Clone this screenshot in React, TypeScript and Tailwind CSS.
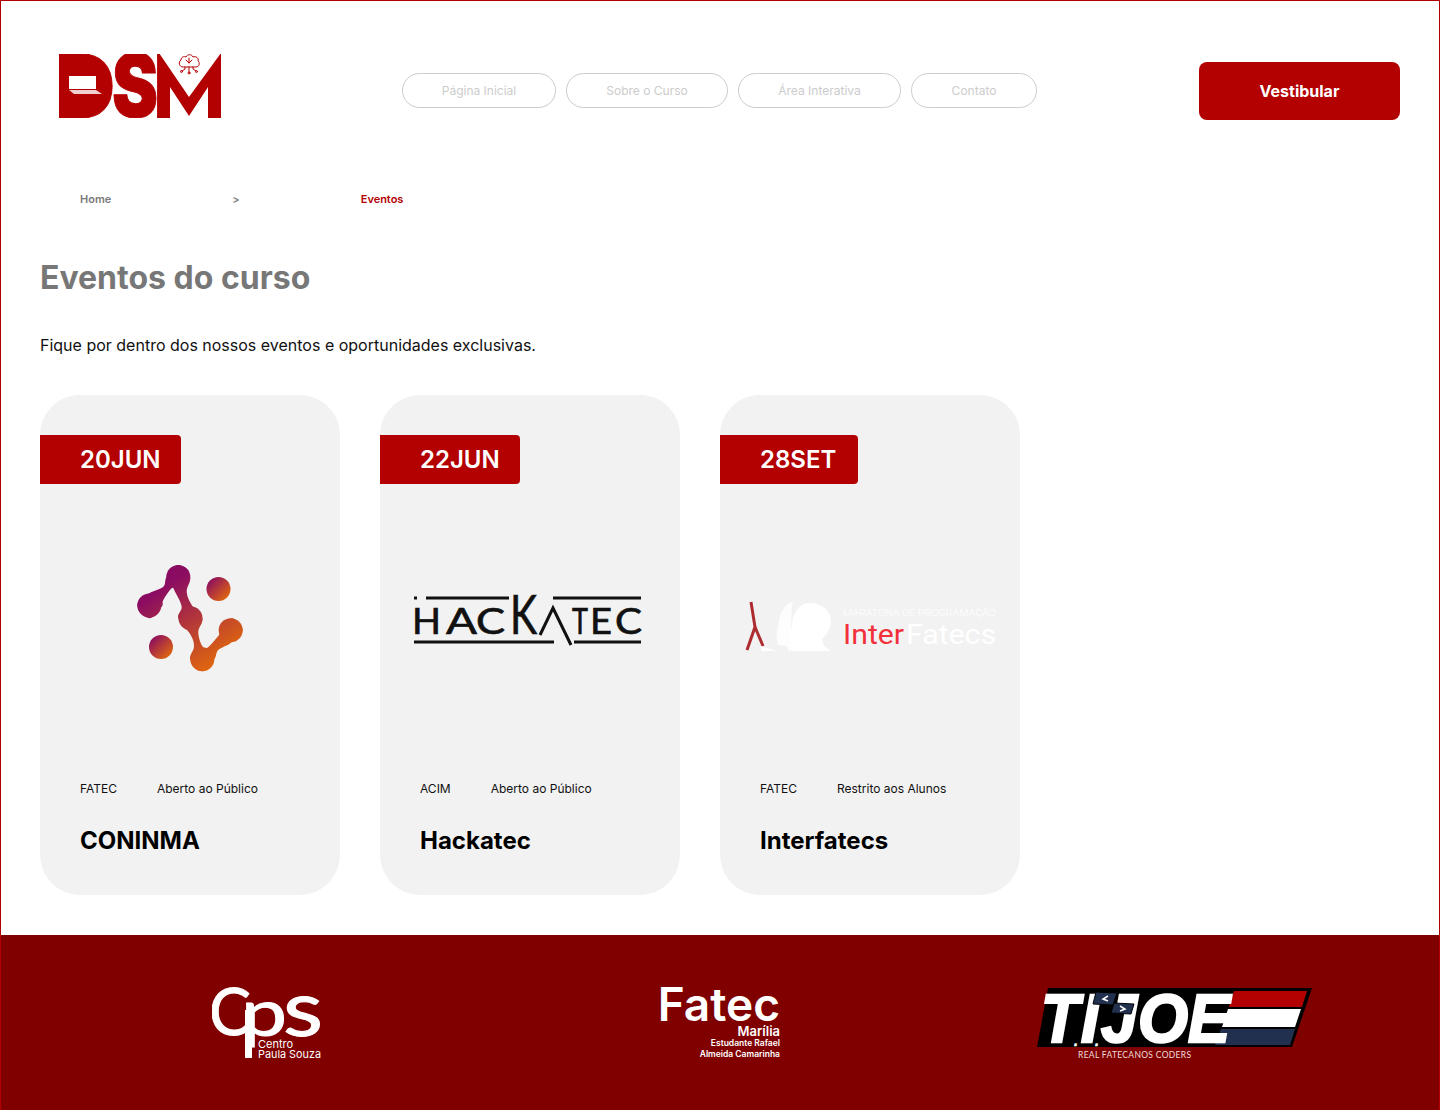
const navItems = [
  { label: 'Página Inicial', width: 'w-[154px]' },
  { label: 'Sobre o Curso', width: 'w-[162px]' },
  { label: 'Área Interativa', width: 'w-[163px]' },
  { label: 'Contato', width: 'w-[126px]' },
]

const FONT = 'Inter, sans-serif'

// closed catmull-rom spline through the traced outline points
function smoothPath(pts: number[][]) {
  const n = pts.length
  let d = `M${pts[0][0]} ${pts[0][1]}`
  for (let i = 0; i < n; i++) {
    const [p0, p1, p2, p3] = [pts[(i - 1 + n) % n], pts[i], pts[(i + 1) % n], pts[(i + 2) % n]]
    const c1 = [p1[0] + (p2[0] - p0[0]) / 6, p1[1] + (p2[1] - p0[1]) / 6]
    const c2 = [p2[0] - (p3[0] - p1[0]) / 6, p2[1] - (p3[1] - p1[1]) / 6]
    d += `C${c1[0]} ${c1[1]} ${c2[0]} ${c2[1]} ${p2[0]} ${p2[1]}`
  }
  return d + 'Z'
}

const moleculeOutline = [
  [178.3, 565], [190, 576.7], [186.7, 591.7], [191.7, 605], [202.3, 618.3], [198.3, 631.7], [201.7, 645],
  [207.3, 647.7], [219, 635], [231, 618.3], [242.7, 630], [231, 642.7], [218.3, 650], [214.3, 659.3],
  [202.3, 671.3], [190.3, 659.3], [194, 646.7], [190.7, 635], [178.3, 618.3], [181.7, 606.7], [175, 591.7],
  [171.7, 588.3], [163.3, 600], [161.7, 606.7], [149.3, 618.3], [137.3, 605], [149.3, 593.3], [163.3, 586.7],
  [166.7, 576.7],
]

function DsmLogo() {
  return (
    <svg width="162" height="64" viewBox="59 54 162 64" className="block">
      <rect x="70" y="62" width="26" height="48" fill="#b30000" />
      <rect x="166" y="56" width="44" height="62" fill="#b30000" />
      <g fontFamily={FONT} fontWeight="900" fontSize="88" fill="#b30000" stroke="#b30000" strokeWidth="1">
        <text x="55" y="118" textLength="60" lengthAdjust="spacingAndGlyphs">D</text>
        <text x="112" y="117" textLength="46" lengthAdjust="spacingAndGlyphs">S</text>
        <text x="154" y="118" textLength="71" lengthAdjust="spacingAndGlyphs">M</text>
      </g>
      <polygon points="159,53 189,97 221,53" fill="#fff" />
      <polygon points="170,87 189,116 208,87 208,120 170,120" fill="#fff" />
      <rect x="69" y="76" width="27" height="13" fill="#fff" />
      <polygon points="69,90 96,90 102,94 74,94" fill="#f0d0d0" />
      {/* cloud with circuit lines */}
      <g fill="none" stroke="#b30000" strokeWidth="1" strokeLinecap="round">
        <path d="M183 67c-4 0-5-5-2-7 0-3 3-4 5-3 1-3 6-3 7 0 3-1 6 1 5 4 2 1 2 6-2 6z" />
        <path d="M189 58v5M186 60l3 3 3-3M189 67v5M185 67v2l-3 2M193 67v2l3 2" />
        <circle cx="189" cy="73" r="1" />
        <circle cx="181.500" cy="71.500" r="1" />
        <circle cx="196.500" cy="71.500" r="1" />
      </g>
    </svg>
  )
}

function MoleculeLogo() {
  return (
    <svg width="300" height="268" viewBox="40 484 300 268" className="block">
      <defs>
        <linearGradient id="mol" gradientUnits="userSpaceOnUse" x1="165" y1="585" x2="220" y2="665">
          <stop offset="0" stopColor="#8a0b62" />
          <stop offset="1" stopColor="#e2690c" />
        </linearGradient>
        <linearGradient id="dotA" x1="0" y1="0" x2="1" y2="1">
          <stop offset="0.1" stopColor="#8a0b62" />
          <stop offset="0.9" stopColor="#e2690c" />
        </linearGradient>
      </defs>
      <g fill="url(#mol)">
        <path d={smoothPath(moleculeOutline)} />
        <circle cx="149.300" cy="605.500" r="12" />
        <circle cx="178.300" cy="577" r="12" />
        <circle cx="190.500" cy="618.300" r="12" />
        <circle cx="202.300" cy="659.300" r="12" />
        <circle cx="230.700" cy="630.300" r="12" />
      </g>
      <circle cx="218.500" cy="589" r="12" fill="url(#dotA)" />
      <circle cx="161" cy="647" r="12" fill="url(#dotA)" />
    </svg>
  )
}

function HackatecLogo() {
  const letters: [string, number, number][] = [
    ['H', 412, 29],
    ['A', 446, 31],
    ['C', 476, 29],
    ['T', 572, 16],
    ['E', 590, 22],
    ['C', 615, 27],
  ]
  return (
    <svg width="300" height="268" viewBox="380 484 300 268" className="block">
      <g fontFamily="Lato, sans-serif" fontWeight="400" fill="#111" stroke="#111" strokeWidth="0.7">
        {letters.map(([ch, x, w]) => (
          <text key={x} x={x} y="634" fontSize="37.500" textLength={w} lengthAdjust="spacingAndGlyphs">{ch}</text>
        ))}
        <text x="510" y="634" fontSize="54" textLength="27" lengthAdjust="spacingAndGlyphs">K</text>
      </g>
      <g stroke="#111" strokeWidth="3" fill="none">
        <path d="M414 598h3M426 598h83M553 598h88M414 642h140M574 642h67" />
        <path d="M540 635L553 608L571 645" />
      </g>
    </svg>
  )
}

function InterfatecsLogo() {
  return (
    <svg width="300" height="268" viewBox="720 484 300 268" className="block">
      <g fill="none" stroke="#ad2c30" strokeWidth="3">
        <path d="M751 602L755 627L747 650" />
        <path d="M755 627L763 646" />
      </g>
      <path d="M760 646L777 651L762 651z" fill="#fff" />
      <path d="M778 645c-2-8-2-11 0-13-1-2-2-3 0-5 1-14 7-24 15-25-3 12-2 36 2 48l-6 1-2-5z" fill="#fff" opacity="0.8" />
      <path d="M792 651l-1-8c-2-1-1-3 0-4-1-1-2-2-1-3l-1-3 3-5c0-14 6-25 18-25 12 0 21 8 21 18 0 8-5 14-9 18l2 7 7 5z" fill="#fff" />
      <text x="843" y="616" fontFamily="Roboto, sans-serif" fontWeight="300" fontSize="9" fill="#fff" textLength="153" lengthAdjust="spacingAndGlyphs">MARATONA DE PROGRAMAÇÃO</text>
      <text x="843" y="644" fontFamily="Roboto, sans-serif" fontWeight="400" fontSize="28" fill="#f2303a" textLength="61" lengthAdjust="spacingAndGlyphs">Inter</text>
      <text x="906" y="644" fontFamily="Roboto, sans-serif" fontWeight="400" fontSize="28" fill="#fff" textLength="90" lengthAdjust="spacingAndGlyphs">Fatecs</text>
    </svg>
  )
}

function CpsLogo() {
  return (
    <svg width="110" height="72" viewBox="212 987 110 72" className="block">
      <rect x="245" y="1010" width="7" height="48" fill="#fff" />
      <g fontFamily="Lato, sans-serif" fontWeight="400" fill="#fff" stroke="#fff" strokeWidth="1">
        <text x="209" y="1035" fontSize="65" textLength="42" lengthAdjust="spacingAndGlyphs">C</text>
        <text x="241" y="1036" fontSize="66" textLength="46" lengthAdjust="spacingAndGlyphs">p</text>
        <text x="283" y="1036" fontSize="78" textLength="40" lengthAdjust="spacingAndGlyphs">s</text>
      </g>
      <g fontFamily={FONT} fontSize="11" fill="#fff">
        <text x="258" y="1048">Centro</text>
        <text x="258" y="1058" textLength="63" lengthAdjust="spacingAndGlyphs">Paula Souza</text>
      </g>
    </svg>
  )
}

function FatecLogo() {
  return (
    <div className="mb-1 flex w-[119px] flex-col items-end text-white">
      <span className="text-[46px] font-semibold leading-[44px]">Fatec</span>
      <span className="mt-[-2px] text-[13px] font-semibold leading-[14px]">Marília</span>
      <span className="text-[8.500px] font-semibold leading-[11px]">Estudante Rafael</span>
      <span className="text-[8.500px] font-semibold leading-[11px]">Almeida Camarinha</span>
    </div>
  )
}

function TiJoeLogo() {
  const letters: [string, number, number][] = [
    ['T', 1040, 38],
    ['I', 1080, 18],
    ['J', 1100, 36],
    ['O', 1137, 50],
    ['E', 1187, 42],
  ]
  return (
    <svg width="276" height="72" viewBox="1036 987 276 72" className="block">
      <polygon points="1047,988 1311,988 1291,1047 1036,1047" fill="#000" />
      <polygon points="1233,991 1306,991 1301,1007 1228,1007" fill="#b30000" />
      <polygon points="1227,1009 1300,1009 1294,1027 1221,1027" fill="#fff" />
      <polygon points="1220,1029 1294,1029 1289,1045 1214,1045" fill="#22304f" />
      <g fontFamily="'Liberation Sans', sans-serif" fontWeight="700" fontStyle="italic" fill="#fff" stroke="#fff" strokeWidth="2.500">
        {letters.map(([ch, x, w]) => (
          <text key={ch} x={x} y="1042" fontSize="68" textLength={w} lengthAdjust="spacingAndGlyphs">{ch}</text>
        ))}
        <text x="1073" y="1046" fontSize="14" strokeWidth="0.5">.</text>
        <text x="1094" y="1046" fontSize="14" strokeWidth="0.5">.</text>
      </g>
      <g stroke="#000" strokeWidth="1" fill="#22304f">
        <polygon points="1095,992 1116,993 1112,1005 1092,1004" />
        <polygon points="1113,1003 1133,1004 1130,1014 1110,1013" />
      </g>
      <g stroke="#fff" strokeWidth="1.500" fill="none">
        <path d="M1107 996l-5 3 5 2" />
        <path d="M1119 1006l5 3-5 2" />
      </g>
      <text x="1077" y="1058" fontFamily="Lato, sans-serif" fontSize="8.500" fill="#f0dcdc" textLength="113">REAL FATECANOS CODERS</text>
    </svg>
  )
}

const events = [
  { date: '20JUN', tag: 'w-[141px]', logo: <MoleculeLogo />, org: 'FATEC', access: 'Aberto ao Público', title: 'CONINMA' },
  { date: '22JUN', tag: 'w-[140px]', logo: <HackatecLogo />, org: 'ACIM', access: 'Aberto ao Público', title: 'Hackatec' },
  { date: '28SET', tag: 'w-[138px]', logo: <InterfatecsLogo />, org: 'FATEC', access: 'Restrito aos Alunos', title: 'Interfatecs' },
]

export default function App() {
  return (
    <div className="flex h-[1110px] flex-col border border-b-0 border-[#b30000] bg-white font-['Inter',sans-serif]">
      {/* Header */}
      <header className="flex h-[179px] items-center px-[39px]">
        <div className="mb-[10px] ml-[19px] w-[343px]">
          <DsmLogo />
        </div>
        <nav className="flex gap-2.5">
          {navItems.map(item => (
            <a key={item.label} className={`flex h-[35px] items-center justify-center rounded-[18px] border border-[#cccccc] text-xs text-[#cccccc] ${item.width}`}>
              {item.label}
            </a>
          ))}
        </nav>
        <button className="ml-auto mt-px h-[58px] w-[201px] rounded-lg bg-[#b30000] text-base font-bold text-white">
          Vestibular
        </button>
      </header>

      {/* Breadcrumb */}
      <div className="flex h-[38px] items-center gap-[41px] px-[39px] text-[11px] font-semibold">
        <span className="px-10 text-[#7a7a7a]">Home</span>
        <span className="px-10 text-[#7a7a7a]">&gt;</span>
        <span className="px-10 text-[#b30000]">Eventos</span>
      </div>

      <main className="flex-1 px-[39px]">
        <h1 className="mt-10 text-[32px] font-bold leading-[40px] text-[#777777]">Eventos do curso</h1>
        <p className="mt-[37px] text-base leading-5 text-[#111111]">
          Fique por dentro dos nossos eventos e oportunidades exclusivas.
        </p>

        <div className="mt-10 flex gap-10">
          {events.map(ev => (
            <article key={ev.title} className="flex h-[500px] w-[300px] flex-col rounded-[40px] bg-[#f2f2f2] pt-10">
              <div className={`flex h-[49px] items-center rounded-r-[4px] bg-[#b30000] pl-10 text-2xl font-semibold text-white ${ev.tag}`}>
                {ev.date}
              </div>
              <div className="h-[268px]">{ev.logo}</div>
              <div className="mt-[29px] flex gap-10 px-10 text-xs leading-[15px] text-[#111111]">
                <span>{ev.org}</span>
                <span>{ev.access}</span>
              </div>
              <h2 className="mt-[30px] px-10 text-2xl font-bold leading-[30px] text-black">{ev.title}</h2>
            </article>
          ))}
        </div>
      </main>

      {/* Footer */}
      <footer className="flex h-[175px] items-center bg-[#800000] pl-[211px]">
        <CpsLogo />
        <div className="ml-[339px]">
          <FatecLogo />
        </div>
        <div className="ml-[257px]">
          <TiJoeLogo />
        </div>
      </footer>
    </div>
  )
}
